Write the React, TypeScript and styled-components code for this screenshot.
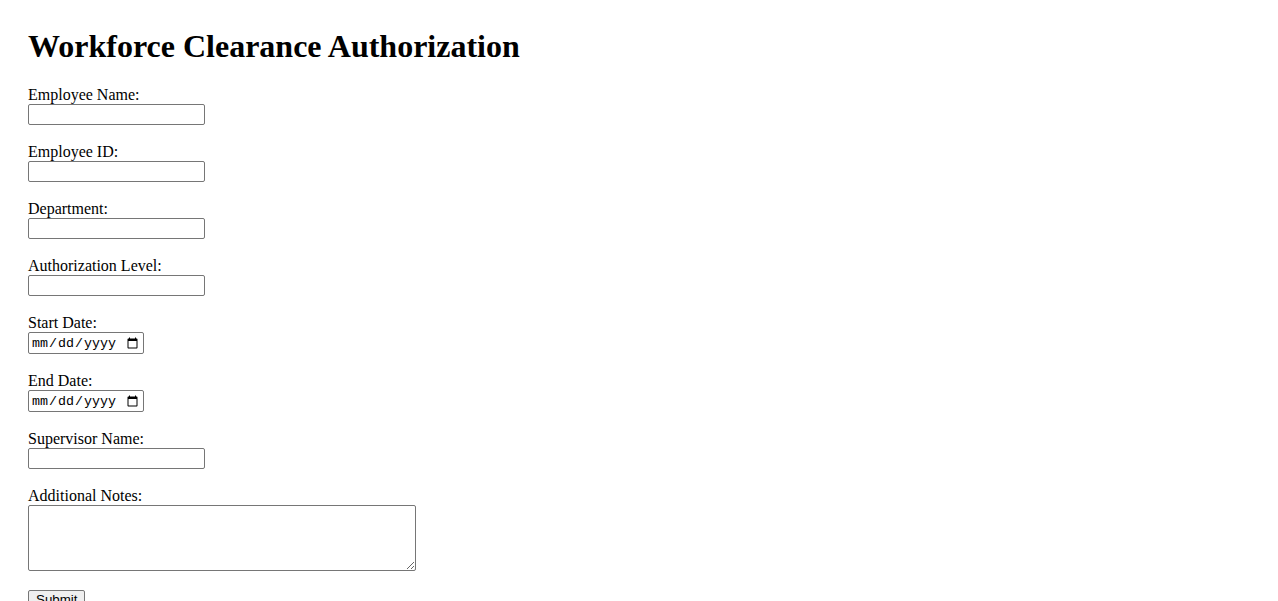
import React from "react";
import styled, { createGlobalStyle } from "styled-components";

const Global = createGlobalStyle`
  body {
    margin: 8px;
    font-family: "Liberation Serif", "Times New Roman", serif;
    font-size: 16px;
    color: #000;
    background: #fff;
  }
`;

const Page = styled.div`
  padding: 20px;
`;

const Title = styled.h1`
  font-size: 32px;
  font-weight: bold;
  margin: 0 0 21.44px;
`;

const Form = styled.form`
  margin: 0;
`;

const Label = styled.label`
  font-size: 16px;
`;

const TextInput = styled.input`
  box-sizing: border-box;
  width: 177px;
  height: 21px;
  font-family: "Liberation Sans", Arial, sans-serif;
  font-size: 13.333px;
  padding: 1px 2px;
  border: 1px solid #767676;
  border-radius: 2px;
  margin: 0;
`;

const DateInput = styled.input`
  box-sizing: border-box;
  width: 116px;
  height: 22px;
  font-family: "Liberation Mono", monospace;
  font-size: 13.333px;
  padding: 1px 2px;
  border: 1px solid #767676;
  border-radius: 2px;
  margin: 0;
`;

const Notes = styled.textarea`
  box-sizing: border-box;
  width: 388px;
  height: 66px;
  font-family: "Liberation Mono", monospace;
  font-size: 13.333px;
  padding: 2px;
  border: 1px solid #767676;
  border-radius: 2px;
  margin: 0;
  vertical-align: text-bottom;
`;

const SubmitButton = styled.button`
  font-family: "Liberation Sans", Arial, sans-serif;
  font-size: 13.333px;
  padding: 1px 7px;
  border: 1px solid #767676;
  border-radius: 2px;
  background: #efefef;
  margin: 0;
`;

type Field = { id: string; label: string; kind: "text" | "date" };

const fields: Field[] = [
  { id: "name", label: "Employee Name:", kind: "text" },
  { id: "empid", label: "Employee ID:", kind: "text" },
  { id: "dept", label: "Department:", kind: "text" },
  { id: "level", label: "Authorization Level:", kind: "text" },
  { id: "start", label: "Start Date:", kind: "date" },
  { id: "end", label: "End Date:", kind: "date" },
  { id: "supervisor", label: "Supervisor Name:", kind: "text" },
];

export default function App() {
  return (
    <>
      <Global />
      <Page>
        <Title>Workforce Clearance Authorization</Title>
        <Form onSubmit={(e) => e.preventDefault()}>
          {fields.map((f) => (
            <React.Fragment key={f.id}>
              <Label htmlFor={f.id}>{f.label}</Label>
              <br />
              {f.kind === "date" ? (
                <DateInput type="date" id={f.id} />
              ) : (
                <TextInput type="text" id={f.id} />
              )}
              <br />
              <br />
            </React.Fragment>
          ))}
          <Label htmlFor="notes">Additional Notes:</Label>
          <br />
          <Notes id="notes" />
          <br />
          <br />
          <SubmitButton type="submit">Submit</SubmitButton>
        </Form>
      </Page>
    </>
  );
}
